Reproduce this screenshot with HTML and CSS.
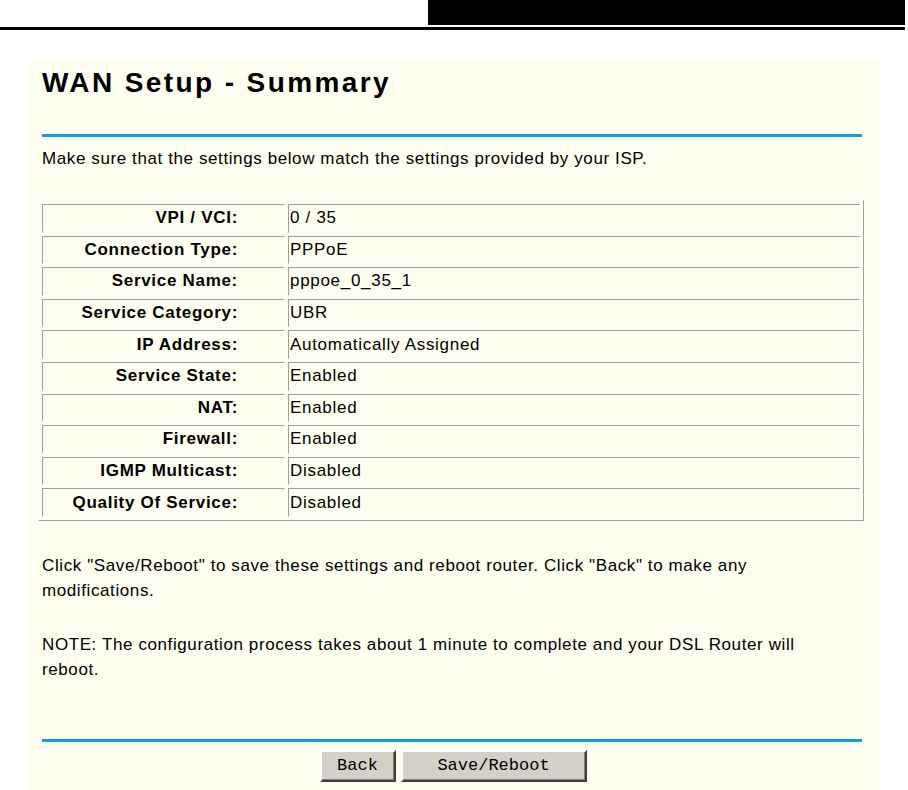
FILE: index.html
```html
<!DOCTYPE html>
<html>
<head>
<meta name="viewport" content="width=device-width, initial-scale=1.0">
  <title>WAN Setup - Summary</title>
<link rel="stylesheet" href="styles.css">
</head>
<body>
<!-- page header of the manual -->
<div class="top">
  <div class="top-box"></div>
</div>
<div class="top-line"></div>

<div class="panel">
  <h1 class="title">WAN Setup - Summary</h1>
  <div class="rule"></div>
  <p class="lead">Make sure that the settings below match the settings provided by your ISP.</p>

  <table class="summary">
    <tr><td class="label">VPI / VCI:</td><td class="value">0 / 35</td></tr>
    <tr><td class="label">Connection Type:</td><td class="value">PPPoE</td></tr>
    <tr><td class="label">Service Name:</td><td class="value">pppoe_0_35_1</td></tr>
    <tr><td class="label">Service Category:</td><td class="value">UBR</td></tr>
    <tr><td class="label">IP Address:</td><td class="value">Automatically Assigned</td></tr>
    <tr><td class="label">Service State:</td><td class="value">Enabled</td></tr>
    <tr><td class="label">NAT:</td><td class="value">Enabled</td></tr>
    <tr><td class="label">Firewall:</td><td class="value">Enabled</td></tr>
    <tr><td class="label">IGMP Multicast:</td><td class="value">Disabled</td></tr>
    <tr><td class="label">Quality Of Service:</td><td class="value">Disabled</td></tr>
  </table>

  <p class="note first">Click "Save/Reboot" to save these settings and reboot router. Click "Back" to make any modifications.</p>
  <p class="note">NOTE: The configuration process takes about 1 minute to complete and your DSL Router will reboot.</p>

  <div class="rule rule-bottom"></div>
  <div class="actions">
    <button class="btn btn-back">Back</button>
    <button class="btn btn-save">Save/Reboot</button>
  </div>
</div>
</body>
</html>
```

FILE: styles.css
```css
* {box-sizing: border-box;}

body {
  margin: 0;
  background: #fff;
  color: #000;
  font-family: "Liberation Sans", Arial, sans-serif;
  overflow: hidden;
}

/* header bar */
.top {
  display: flex;
  justify-content: flex-end;
  padding-right: 3px;
}

.top-box {
  width: 477px;
  height: 25px;
  background: #000;
}

.top-line {
  margin-top: 2px;
  width: 905px;
  height: 3px;
  background: #000;
}

/* cream page area */
.panel {
  margin: 31px 0 0 28px;
  width: 852px;
  min-height: 729px;
  padding: 0 18px 0 14px;
  background: #fefef0;
}

.title {
  margin: 0;
  padding-top: 7px;
  font-size: 28px;
  line-height: 30px;
  font-weight: bold;
  letter-spacing: 2.4px;
}

.rule {
  margin-top: 36px;
  height: 3px;
  background: #1a9bd7;
}

.lead {
  margin: 9px 0 0;
  font-size: 17px;
  line-height: 25px;
  letter-spacing: 0.6px;
}

/* summary table */
.summary {
  margin: 29px 0 0 -4px;
  width: 826px;
  border-collapse: separate;
  border-spacing: 3px;
  border: 1px solid;
  border-color: #fff #a0a0a0 #a0a0a0 #fff;
  font-size: 17px;
  letter-spacing: 0.7px;
}

.summary td {
  height: 28.6px;
  padding: 0;
  border: 1px solid;
  border-color: #a0a0a0 #fff #fff #a0a0a0;
}

.summary .label {
  width: 243px;
  text-align: right;
  font-weight: bold;
  padding-right: 46px;
}

.summary .value {
  padding-left: 1px;
}

.note {
  max-width: 770px;
  margin: 29px 0 0;
  font-size: 17px;
  line-height: 25px;
  letter-spacing: 0.6px;
}

.note.first {
  margin-top: 32px;
}

.rule-bottom {
  margin-top: 57px;
}

/* buttons */
.actions {
  display: flex;
  justify-content: center;
  gap: 5px;
  margin-top: 8px;
  padding-left: 2px;
}

.btn {
  height: 32px;
  padding: 0;
  background: #d4d0c8;
  border: 2px solid;
  border-color: #fff #404040 #404040 #fff;
  box-shadow: inset -1px -1px 0 #808080;
  font-family: "Liberation Mono", "Courier New", monospace;
  font-size: 17px;
  color: #000;
}

.btn-back {
  width: 76px;
}

.btn-save {
  width: 186px;
}
```
